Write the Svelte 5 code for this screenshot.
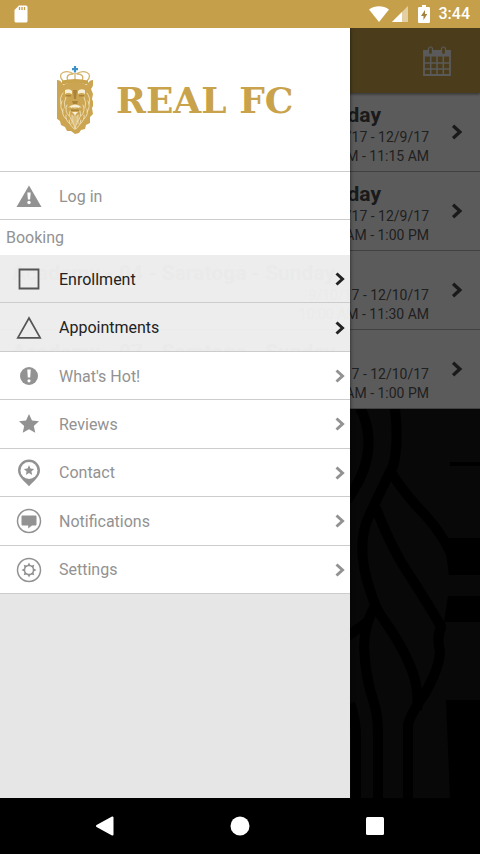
<script lang="ts">
  type Session = { title: string; dates: string; times: string };
  type Item = { label: string; icon: string; active?: boolean };

  const sessions: Session[] = [
    { title: 'Academy - 04/05 - Saratoga - Saturday', dates: '9/9/17 - 12/9/17', times: '10:00 AM - 11:15 AM' },
    { title: 'Academy - 06/07 - Saratoga - Saturday', dates: '9/9/17 - 12/9/17', times: '11:30 AM - 1:00 PM' },
    { title: 'Academy - 04 - Saratoga - Sunday', dates: '9/10/17 - 12/10/17', times: '10:00 AM - 11:30 AM' },
    { title: 'Academy - 07 - Saratoga - Sunday', dates: '9/10/17 - 12/10/17', times: '11:30 AM - 1:00 PM' },
  ];

  const items: Item[] = [
    { label: 'Enrollment', icon: 'square', active: true },
    { label: 'Appointments', icon: 'triangle', active: true },
    { label: "What's Hot!", icon: 'alert' },
    { label: 'Reviews', icon: 'star' },
    { label: 'Contact', icon: 'pin' },
    { label: 'Notifications', icon: 'chat' },
    { label: 'Settings', icon: 'gear' },
  ];

  // Strands of the mane, mirrored around the middle of the face
  const strands = [
    'M6 27q-4 5-2 11', 'M5 35q-3 6 1 11', 'M6 43q-2 5 3 10', 'M9 49q-1 5 4 9', 'M12 54q0 5 5 9',
    'M9 31q-3 6-1 11', 'M10 39q-3 6 2 11', 'M13 45q-2 6 3 11', 'M16 50q-1 6 2 13',
  ];
</script>

{#snippet chevron()}
  <svg class="chevron" viewBox="0 0 12 16" aria-hidden="true">
    <path d="M2.5 2.5 8.5 8l-6 5.5" fill="none" stroke="currentColor" stroke-width="3" />
  </svg>
{/snippet}

{#snippet glyph(name: string)}
  <svg class="glyph" viewBox="0 0 28 28" aria-hidden="true">
    {#if name === 'warning'}
      <path d="M14 3.500 26.500 25h-25z" fill="currentColor" />
      <path d="M12.300 10.500h3.400l-.6 7h-2.200z" fill="#fff" />
      <circle cx="14" cy="20.500" r="1.700" fill="#fff" />
    {:else if name === 'square'}
      <path d="M4.500 4.500h19v19h-19z" fill="none" stroke="currentColor" stroke-width="1.800" />
    {:else if name === 'triangle'}
      <path d="M14 4 25.200 23.800H2.800z" fill="none" stroke="currentColor" stroke-width="1.700" />
    {:else if name === 'alert'}
      <circle cx="14" cy="14" r="9" fill="currentColor" />
      <path d="M12.300 7.500h3.400l-.5 8h-2.400z" fill="#fff" />
      <circle cx="14" cy="18.800" r="1.600" fill="#fff" />
    {:else if name === 'star'}
      <path d="m14 4 3 6.400 7 .8-5.200 4.700 1.500 6.900L14 19.300l-6.300 3.500 1.500-6.900L4 11.200l7-.8z" fill="currentColor" />
    {:else if name === 'pin'}
      <path d="M14 27.300C10 22.500 3 18 3 11.500a11 11 0 0 1 22 0C25 18 18 22.500 14 27.300z" fill="currentColor" />
      <circle cx="14" cy="11.500" r="8.500" fill="#fff" />
      <path d="m14 6.300 1.500 3.300 3.600.4-2.700 2.400.8 3.500-3.200-1.800-3.200 1.800.8-3.500L8.900 10l3.600-.4z" fill="currentColor" />
    {:else if name === 'chat'}
      <circle cx="14" cy="14" r="11.500" fill="none" stroke="currentColor" stroke-width="1.500" />
      <path d="M7.500 8.500h13a1 1 0 0 1 1 1v8a1 1 0 0 1-1 1H17l-3.800 3v-3H7.500a1 1 0 0 1-1-1v-8a1 1 0 0 1 1-1z" fill="currentColor" />
    {:else if name === 'gear'}
      <circle cx="14" cy="14" r="11.500" fill="none" stroke="currentColor" stroke-width="1.500" />
      <circle cx="14" cy="14" r="4.500" fill="none" stroke="currentColor" stroke-width="1.500" />
      {#each [0, 45, 90, 135, 180, 225, 270, 315] as angle}
        <path d="M12.200 9.700 14 6.500l1.800 3.200" fill="currentColor" transform="rotate({angle} 14 14)" />
      {/each}
    {/if}
  </svg>
{/snippet}

<div class="screen">
  <div class="status">
    <svg class="sd" viewBox="0 0 14 18" aria-hidden="true">
      <path d="M5 .5h7A1.500 1.500 0 0 1 13.500 2v14a1.500 1.500 0 0 1-1.500 1.500H2A1.500 1.500 0 0 1 .5 16V5z" fill="#fff" />
      <path d="M5.500 2v3M8 2v3M10.500 2v3" stroke="#c59f4a" stroke-width="1.300" />
    </svg>
    <div class="signals">
      <svg class="wifi" viewBox="0 0 20 16" aria-hidden="true">
        <path d="M10 16 0 3.500C6-.9 14-.9 20 3.500z" fill="#fff" />
      </svg>
      <svg class="cell" viewBox="0 0 16 16" aria-hidden="true">
        <path d="M16 0v16H0z" fill="#e3cfa2" />
        <path d="M10 6v10H0z" fill="#fff" />
      </svg>
      <svg class="battery" viewBox="0 0 12 18" aria-hidden="true">
        <path d="M4 0h4v2h2.500A1.300 1.300 0 0 1 12 3.300v13.400a1.300 1.300 0 0 1-1.300 1.300H1.300A1.300 1.300 0 0 1 0 16.700V3.300A1.300 1.300 0 0 1 1.300 2H4z" fill="#fff" />
        <path d="M7 5 3 11h2.500v4l3.800-6H7z" fill="#a5823a" />
      </svg>
      <span class="clock">3:44</span>
    </div>
  </div>

  <div class="stage">
    <svg class="backdrop" viewBox="0 0 480 770" preserveAspectRatio="xMaxYMin slice" aria-hidden="true">
      <!-- drawn in screen coordinates, so shifted up by the status bar -->
      <g transform="translate(0 -28)">
        <g fill="none" stroke="#000" stroke-width="10">
          <path d="M360 408q12 22 7 50-4 20-20 42" />
          <path d="M395 408q4 38-2 58-12 24-24 50-14 30 1 74 6 20 14 30 24 34 31 60 4 14 2 30" />
          <path d="M392 474q16 24 34 42 18 20 28 44" />
          <path d="M376 508q16 42 34 68 18 28 32 52" />
          <path d="M442 625q-6 12-2 26 0 16-16 44-14 20-16 30v75" />
          <path d="M376 604q-12 20-12 44 2 32 10 55 4 12 4 32v65" />
          <path d="M348 636l22-16M350 704q6 14 6 34v62" />
        </g>
        <path d="M444 538h36v37h-31zM448 596h32v26h-36zM446 700h34v98h-30zM450 462h30v4h-30z" fill="#000" />
      </g>
    </svg>

    <main class="page">
      <header class="bar">
        <button class="calendar" type="button" aria-label="Calendar">
          <svg viewBox="0 0 28 30" aria-hidden="true">
            <path d="M1 5h26v24H1z" fill="none" stroke="currentColor" stroke-width="1.800" />
            <path d="M1 4.500h26v6H1z" fill="currentColor" />
            <path d="M7.700 10v19M14 10v19M20.300 10v19M1 17h26M1 23h26" stroke="currentColor" stroke-width="1.500" />
            <rect x="5.500" y="1" width="4" height="7.500" rx="2" fill="#c59f4a" stroke="currentColor" stroke-width="1.200" />
            <rect x="18.500" y="1" width="4" height="7.500" rx="2" fill="#c59f4a" stroke="currentColor" stroke-width="1.200" />
          </svg>
        </button>
      </header>
      <ul class="sessions">
        {#each sessions as session}
          <li>
            <div class="info">
              <h2>{session.title}</h2>
              <p>{session.dates}</p>
              <p>{session.times}</p>
            </div>
            {@render chevron()}
          </li>
        {/each}
      </ul>
    </main>

    <div class="scrim"></div>

    <aside class="drawer">
      <div class="brand">
        <svg class="lion" viewBox="0 0 36 68" aria-hidden="true">
          <path d="M18 0v6.500M15 3.200h6" stroke="#3d93c4" stroke-width="2.200" />
          <g fill="none" stroke="#d3b46c" stroke-width="1.300">
            <path d="M6 15Q1 9 6 6.500q5-2.500 11 1.500M30 15q5-6 0-8.500-5-2.500-11 1.500M11 15Q8 8 16 8M25 15q3-7-5-7M18 7v8" />
          </g>
          <path d="M5 14.500q13-3 26 0v4q-13-3-26 0z" fill="#c9a24c" />
          <path d="M0 14q4 0 6 5 12-6 24 0 2-5 6-5 1 6-2 9l2 5-1 5 2 5-2 4 1 6-3 3v6l-4 2-1 4-4 1-2 3-4 1-4-3-4 0-2-4-4-2-1-4-4-3 0-5-3-4 1-5-2-5 2-5-1-5 2-5q-3-4-2-9z" fill="#cca552" />
          <g fill="none" stroke="#f4e7c4" stroke-width="0.800" stroke-linecap="round">
            {#each strands as d}
              <path {d} />
              <path {d} transform="translate(36 0) scale(-1 1)" />
            {/each}
            <path d="M12 41q3-2 6 1 3-3 6-1M15 49v9M18 48v12M21 49v9" />
          </g>
          <path d="M8 24q5-2 7 1v3q-4-2-7 0zM28 24q-5-2-7 1v3q4-2 7 0zM13 40q5-3 10 0l-1 2q-4-2-8 0zM15 46h6l-3 3z" fill="#f7eed6" />
          <path d="M15 35h6l-1 3h-4zM9 29h5v1.500H9zM22 29h5v1.500h-5zM14 43.500h8v1.500h-8zM16 24l1 9h2l1-9z" fill="#a98338" />
        </svg>
        <span class="wordmark">REAL FC</span>
      </div>

      <button class="row login" type="button">
        {@render glyph('warning')}
        <span>Log in</span>
      </button>

      <h3>Booking</h3>

      <nav class="menu">
        {#each items as item}
          <button class="row" class:active={item.active} type="button">
            {@render glyph(item.icon)}
            <span>{item.label}</span>
            {@render chevron()}
          </button>
        {/each}
      </nav>
    </aside>
  </div>

  <div class="navbar">
    <button type="button" aria-label="Back">
      <svg viewBox="0 0 20 20" aria-hidden="true">
        <path d="M17.500 1.500v17L2 10z" fill="#fff" stroke="#fff" stroke-width="2" stroke-linejoin="round" />
      </svg>
    </button>
    <button type="button" aria-label="Home">
      <svg viewBox="0 0 20 20" aria-hidden="true"><circle cx="10" cy="10" r="9.500" fill="#fff" /></svg>
    </button>
    <button type="button" aria-label="Recent apps">
      <svg viewBox="0 0 20 20" aria-hidden="true"><rect x="1" y="1" width="18" height="18" rx="1.500" fill="#fff" /></svg>
    </button>
  </div>
</div>

<style>
  :global(body) {
    margin: 0;
  }

  .screen {
    display: flex;
    flex-direction: column;
    min-height: 100vh;
    background: #000;
    font-family: Roboto, 'Liberation Sans', sans-serif;
  }

  button {
    border: 0;
    padding: 0;
    background: none;
    font: inherit;
    cursor: pointer;
  }

  svg {
    display: block;
    flex: none;
  }

  h2,
  h3,
  p,
  ul {
    margin: 0;
    padding: 0;
  }

  .status {
    display: flex;
    align-items: center;
    justify-content: space-between;
    height: 28px;
    padding: 0 10px 0 14px;
    background: #c59f4a;
  }

  .sd {
    width: 14px;
    height: 18px;
  }

  .signals {
    display: flex;
    align-items: center;
  }

  .wifi {
    width: 20px;
    height: 16px;
    margin-right: 3px;
  }

  .cell {
    width: 16px;
    height: 16px;
    margin-right: 10px;
  }

  .battery {
    width: 12px;
    height: 18px;
    margin-right: 9px;
  }

  .clock {
    color: #fff;
    font-size: 16px;
    font-weight: 500;
    line-height: 28px;
  }

  .stage {
    position: relative;
    flex: 1;
    overflow: hidden;
    background: #151515;
  }

  .backdrop,
  .scrim {
    position: absolute;
    inset: 0;
    width: 100%;
    height: 100%;
  }

  .scrim {
    background: rgba(0, 0, 0, 0.62);
  }

  .page {
    position: relative;
  }

  .bar {
    position: relative;
    display: flex;
    align-items: center;
    justify-content: flex-end;
    height: 65px;
    padding-right: 29px;
    background: #c59f4a;
    box-shadow: 0 1px 3px rgba(0, 0, 0, 0.5);
  }

  .calendar {
    color: #ededed;
  }

  .calendar svg {
    width: 28px;
    height: 30px;
  }

  .sessions {
    list-style: none;
    background: #f0f0f0;
  }

  .sessions li {
    display: flex;
    align-items: center;
    justify-content: space-between;
    height: 78px;
    padding: 0 16px 0 12px;
    border-bottom: 1px solid #aaa;
    color: #555;
  }

  .info {
    width: 417px;
    padding-top: 4px;
  }

  .info h2 {
    color: #444;
    font-size: 21px;
    line-height: 26px;
    white-space: nowrap;
  }

  .info p {
    font-size: 14px;
    line-height: 19px;
    text-align: right;
  }

  .sessions .chevron {
    width: 14px;
    height: 18px;
    color: #444;
  }

  .drawer {
    position: absolute;
    top: 0;
    bottom: 0;
    left: 0;
    width: 73%;
    background: rgba(255, 255, 255, 0.9);
    box-shadow: 0 0 4px rgba(0, 0, 0, 0.6);
    color: #929292;
  }

  .brand {
    display: flex;
    align-items: center;
    gap: 23px;
    height: 143px;
    padding-left: 57px;
    background: #fff;
    border-bottom: 1px solid #ccc;
  }

  .lion {
    width: 36px;
    height: 68px;
  }

  .wordmark {
    color: #c9a24c;
    font-family: 'DejaVu Serif', serif;
    font-size: 36px;
    font-weight: bold;
    line-height: 40px;
    white-space: nowrap;
  }

  .row {
    display: flex;
    align-items: center;
    width: 100%;
    padding: 1px 4px 0 15px;
    border-bottom: 1px solid #ccc;
    background: #fff;
    color: inherit;
    font-size: 16px;
    text-align: left;
  }

  .row span {
    flex: 1;
    margin-left: 16px;
  }

  .row .chevron {
    width: 12px;
    height: 16px;
  }

  .login {
    height: 48px;
  }

  .glyph {
    width: 28px;
    height: 28px;
  }

  h3 {
    padding-left: 6px;
    background: #fff;
    font-size: 16px;
    font-weight: 400;
    line-height: 35px;
  }

  .menu {
    display: grid;
    grid-auto-rows: 1fr;
    min-height: 339px;
  }

  .row.active {
    background: rgba(235, 235, 235, 0.6);
    color: #222;
  }

  .row.active .glyph {
    color: #555;
  }

  .navbar {
    display: flex;
    align-items: center;
    justify-content: center;
    gap: 115px;
    height: 56px;
  }

  .navbar svg {
    width: 20px;
    height: 20px;
  }
</style>
